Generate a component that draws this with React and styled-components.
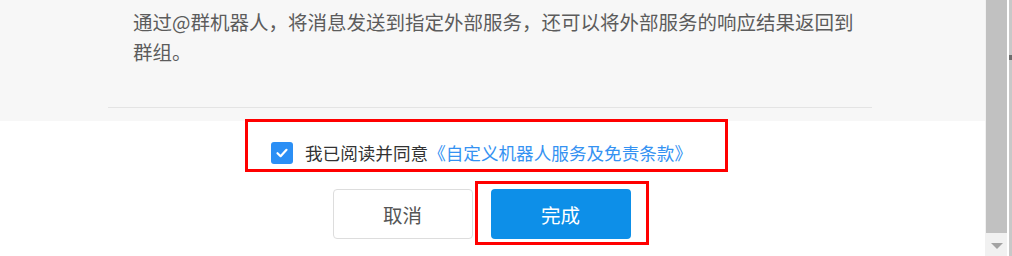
import React from 'react';
import styled, { createGlobalStyle } from 'styled-components';

const GlobalStyle = createGlobalStyle`
  html, body {
    margin: 0;
    padding: 0;
    background: #ffffff;
    overflow: hidden;
  }
  body {
    font-family: "Noto Sans CJK SC", "Noto Sans", sans-serif;
  }
`;

export default function App() {
  return (
    <>
      <GlobalStyle />
      <Page>
        <Main>
          <Intro>
            <IntroText>
              <PrevLine>功能说明：</PrevLine>
              通过@群机器人，将消息发送到指定外部服务，还可以将外部服务的响应结果返回到群组。
            </IntroText>
            <Divider />
          </Intro>
          <Footer>
            <Highlight $pad="18px 33px 3px 23px" $shift="-12px">
              <AgreeRow>
                <CheckBox>
                  <svg width="14" height="14" viewBox="0 0 14 14">
                    <path d="M2.5 7.2 L5.6 10.2 L11.5 3.8" fill="none" stroke="#fff" strokeWidth="2.2" strokeLinecap="round" strokeLinejoin="round" />
                  </svg>
                </CheckBox>
                <AgreeText>
                  我已阅读并同意<Link>《自定义机器人服务及免责条款》</Link>
                </AgreeText>
              </AgreeRow>
            </Highlight>
            <Buttons>
              <Button>取消</Button>
              <Highlight $pad="5px 15px 3px 13px">
                <Button $primary>完成</Button>
              </Highlight>
            </Buttons>
          </Footer>
        </Main>
        <ScrollBar>
          <Thumb />
          <ArrowButton>
            <svg width="12" height="7" viewBox="0 0 12 7">
              <path d="M0 0 H12 L6 6 Z" fill="#a3a3a3" />
            </svg>
          </ArrowButton>
        </ScrollBar>
        <OuterEdge>
          <EdgeMark />
        </OuterEdge>
      </Page>
    </>
  );
}

const Page = styled.div`
  display: flex;
  width: 1012px;
  height: 256px;
  overflow: hidden;
`;

const Main = styled.div`
  width: 985px;
  display: flex;
  flex-direction: column;
`;

const Intro = styled.div`
  background: #f7f7f7;
  height: 121px;
  box-sizing: border-box;
  padding-top: 7px;
  overflow: hidden;
  display: flex;
  flex-direction: column;
`;

const IntroText = styled.div`
  margin: -33px 0 0 133px;
  width: 735px;
  font-size: 19.5px;
  line-height: 30px;
  color: #5c5c5c;
`;

const PrevLine = styled.div`
  height: 33px;
`;

const Divider = styled.div`
  margin: 40px 0 0 108px;
  width: 764px;
  height: 1px;
  background: #e4e4e4;
`;

const Footer = styled.div`
  display: flex;
  flex-direction: column;
  align-items: center;
  gap: 9px;
  margin-top: -2px;
`;

const Highlight = styled.div`
  border: 3px solid #ff0000;
  padding: ${(p) => p.$pad};
  margin-left: ${(p) => p.$shift || '0'};
`;

const AgreeRow = styled.div`
  display: flex;
  align-items: center;
  gap: 12px;
`;

const CheckBox = styled.span`
  width: 22px;
  height: 22px;
  border-radius: 3px;
  background: #2b8ff5;
  display: flex;
  align-items: center;
  justify-content: center;
`;

const AgreeText = styled.span`
  font-size: 17.6px;
  line-height: 26px;
  color: #333333;
`;

const Link = styled.span`
  color: #3592f2;
`;

const Buttons = styled.div`
  display: flex;
  align-items: flex-start;
  gap: 2px;
  margin-right: 4px;
`;

const Button = styled.div`
  width: 140px;
  height: 50px;
  box-sizing: border-box;
  border-radius: 4px;
  display: flex;
  align-items: center;
  justify-content: center;
  font-size: 19.5px;
  margin-top: ${(p) => (p.$primary ? '0' : '8px')};
  background: ${(p) => (p.$primary ? '#0d8fe8' : '#ffffff')};
  color: ${(p) => (p.$primary ? '#ffffff' : '#555555')};
  border: ${(p) => (p.$primary ? 'none' : '1px solid #dddddd')};
`;

const ScrollBar = styled.div`
  width: 22px;
  display: flex;
  flex-direction: column;
  background: #f1f1f1;
  padding-left: 1px;
  box-sizing: border-box;
`;

const Thumb = styled.div`
  flex: 1;
  background: #c1c1c1;
`;

const ArrowButton = styled.div`
  height: 23px;
  display: flex;
  align-items: center;
  justify-content: center;
  background: #f1f1f1;
  padding-top: 4px;
  box-sizing: border-box;
`;

const OuterEdge = styled.div`
  width: 3px;
  margin-left: 2px;
  background: #c8c8c8;
  padding-top: 55px;
`;

const EdgeMark = styled.div`
  height: 5px;
  background: #6e6e6e;
`;
